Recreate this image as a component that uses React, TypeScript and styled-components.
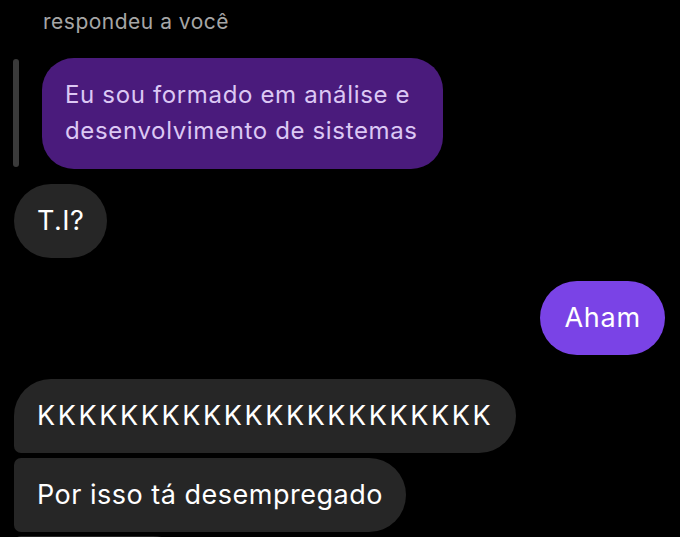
import React from "react";
import styled, { createGlobalStyle, css } from "styled-components";

const GlobalStyle = createGlobalStyle`
  html, body {
    margin: 0;
    padding: 0;
    background: #000;
    overflow: hidden;
  }
  body {
    font-family: Inter, "Noto Sans", "Liberation Sans", sans-serif;
    -webkit-font-smoothing: antialiased;
  }
`;

const Thread = styled.div`
  display: flex;
  flex-direction: column;
  padding: 10px 15px 0 14px;
  height: 537px;
  box-sizing: border-box;
  overflow: hidden;
`;

const ReplyLabel = styled.div`
  margin-left: 29px;
  font-size: 21px;
  line-height: 24px;
  color: #a6a6a6;
  letter-spacing: 0.5px;
`;

const ReplyRow = styled.div`
  display: flex;
  align-items: stretch;
  gap: 23px;
  margin-top: 24px;
`;

const ReplyBar = styled.div`
  width: 6px;
  margin: 1px 0 2px -1px;
  border-radius: 3px;
  background: #3a3a3a;
`;

const ReplyBubble = styled.div`
  background: #4a1b7c;
  color: #dcc8f4;
  border-radius: 32px;
  padding: 19px 25px 20px 23px;
  font-size: 24px;
  line-height: 36px;
  letter-spacing: 0.65px;
`;

const Row = styled.div<{ $mine?: boolean; $gap: number }>`
  display: flex;
  justify-content: ${(p) => (p.$mine ? "flex-end" : "flex-start")};
  margin-top: ${(p) => p.$gap}px;
`;

type Shape = "single" | "first" | "middle";

const Bubble = styled.div<{ $mine?: boolean; $shape?: Shape; $width?: number }>`
  box-sizing: border-box;
  height: 74px;
  display: flex;
  align-items: center;
  padding: 0 ${(p) => (p.$mine ? 24 : 23)}px;
  font-size: 27px;
  line-height: 32px;
  letter-spacing: ${(p) => (p.$mine ? 0.8 : 0.5)}px;
  white-space: nowrap;
  color: #fff;
  background: ${(p) => (p.$mine ? "#7a43e6" : "#262626")};
  border-radius: 37px;
  ${(p) =>
    p.$shape === "first" &&
    css`
      border-bottom-left-radius: 7px;
    `}
  ${(p) =>
    p.$shape === "middle" &&
    css`
      border-top-left-radius: 7px;
      border-bottom-left-radius: 7px;
    `}
  ${(p) =>
    p.$width &&
    css`
      width: ${p.$width}px;
    `}
`;

const Ks = styled.span`
  letter-spacing: 2.6px;
`;

export default function App() {
  return (
    <>
      <GlobalStyle />
      <Thread>
        <ReplyLabel>respondeu a você</ReplyLabel>
        <ReplyRow>
          <ReplyBar />
          <ReplyBubble>
            Eu sou formado em análise e
            <br />
            desenvolvimento de sistemas
          </ReplyBubble>
        </ReplyRow>
        <Row $gap={15}>
          <Bubble>T.I?</Bubble>
        </Row>
        <Row $gap={23} $mine>
          <Bubble $mine>Aham</Bubble>
        </Row>
        <Row $gap={24}>
          <Bubble $shape="first">
            <Ks>KKKKKKKKKKKKKKKKKKKKKK</Ks>
          </Bubble>
        </Row>
        <Row $gap={5}>
          <Bubble $shape="middle">Por isso tá desempregado</Bubble>
        </Row>
        <Row $gap={4}>
          <Bubble $shape="middle" $width={176}>
            &nbsp;
          </Bubble>
        </Row>
      </Thread>
    </>
  );
}
